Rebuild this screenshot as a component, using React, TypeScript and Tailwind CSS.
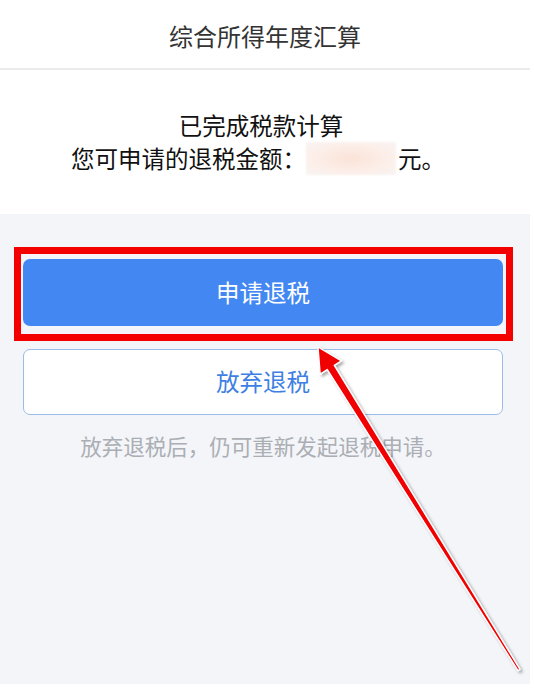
import React from "react";

const font = { fontFamily: '"Noto Sans CJK SC", "Noto Sans", sans-serif' };

function Arrow() {
  // annotation arrow drawn over the page
  return (
    <svg
      className="absolute left-0 top-0 pointer-events-none"
      width="534"
      height="690"
      viewBox="0 0 534 690"
    >
      <defs>
        <filter id="sh" x="-20%" y="-20%" width="140%" height="140%">
          <feDropShadow dx="2" dy="2" stdDeviation="1.6" floodColor="#000" floodOpacity="0.35" />
        </filter>
      </defs>
      <polygon
        points="318,347 341.4,360.8 334.3,365.4 520,669.4 518,670.6 327.3,369.6 320.2,374.2"
        fill="#f00000"
        stroke="#ffffff"
        strokeWidth="1.4"
        strokeLinejoin="round"
        filter="url(#sh)"
      />
    </svg>
  );
}

export default function App() {
  return (
    <div className="relative w-[534px] h-[690px] bg-white" style={font}>
      <div className="flex flex-col w-[530px] h-[684px]">
        <div className="h-[70px] flex items-center justify-center pt-[4px] border-b-2 border-[#ebebeb] text-[24px] text-[#333]">
          综合所得年度汇算
        </div>

        <div className="h-[144px] bg-white pt-[39px] flex flex-col items-center text-[23.5px] leading-[33px] text-[#111]">
          <div className="-ml-[8px]">已完成税款计算</div>
          <div className="flex items-center -ml-[14px]">
            <span>您可申请的退税金额：</span>
            <span className="inline-block w-[90px] h-[33px] bg-[radial-gradient(ellipse_at_center,#fbe3d8_0%,#fcefe9_60%,#f8f4f3_100%)] blur-[1px]" />
            <span className="ml-[2px]">元。</span>
          </div>
        </div>

        <div className="flex-1 bg-[#f3f5f9] pt-[45px] pl-[23px] pr-[27px] flex flex-col">
          <button className="h-[67px] w-full rounded-[7px] bg-[#4387f2] text-white text-[23.5px] flex items-center justify-center">
            申请退税
          </button>
          <button className="mt-[23px] h-[66px] w-full rounded-[7px] bg-white border border-[#9dbbe8] text-[#3d7fe3] text-[23.5px] flex items-center justify-center">
            放弃退税
          </button>
          <p className="mt-[17px] text-center text-[21.5px] leading-[28px] text-[#abaeb3]">
            放弃退税后，仍可重新发起退税申请。
          </p>
        </div>
      </div>

      <div className="absolute left-[14px] top-[247px] w-[499px] h-[94px] border-[7px] border-[#f50000]" />
      <Arrow />
    </div>
  );
}
